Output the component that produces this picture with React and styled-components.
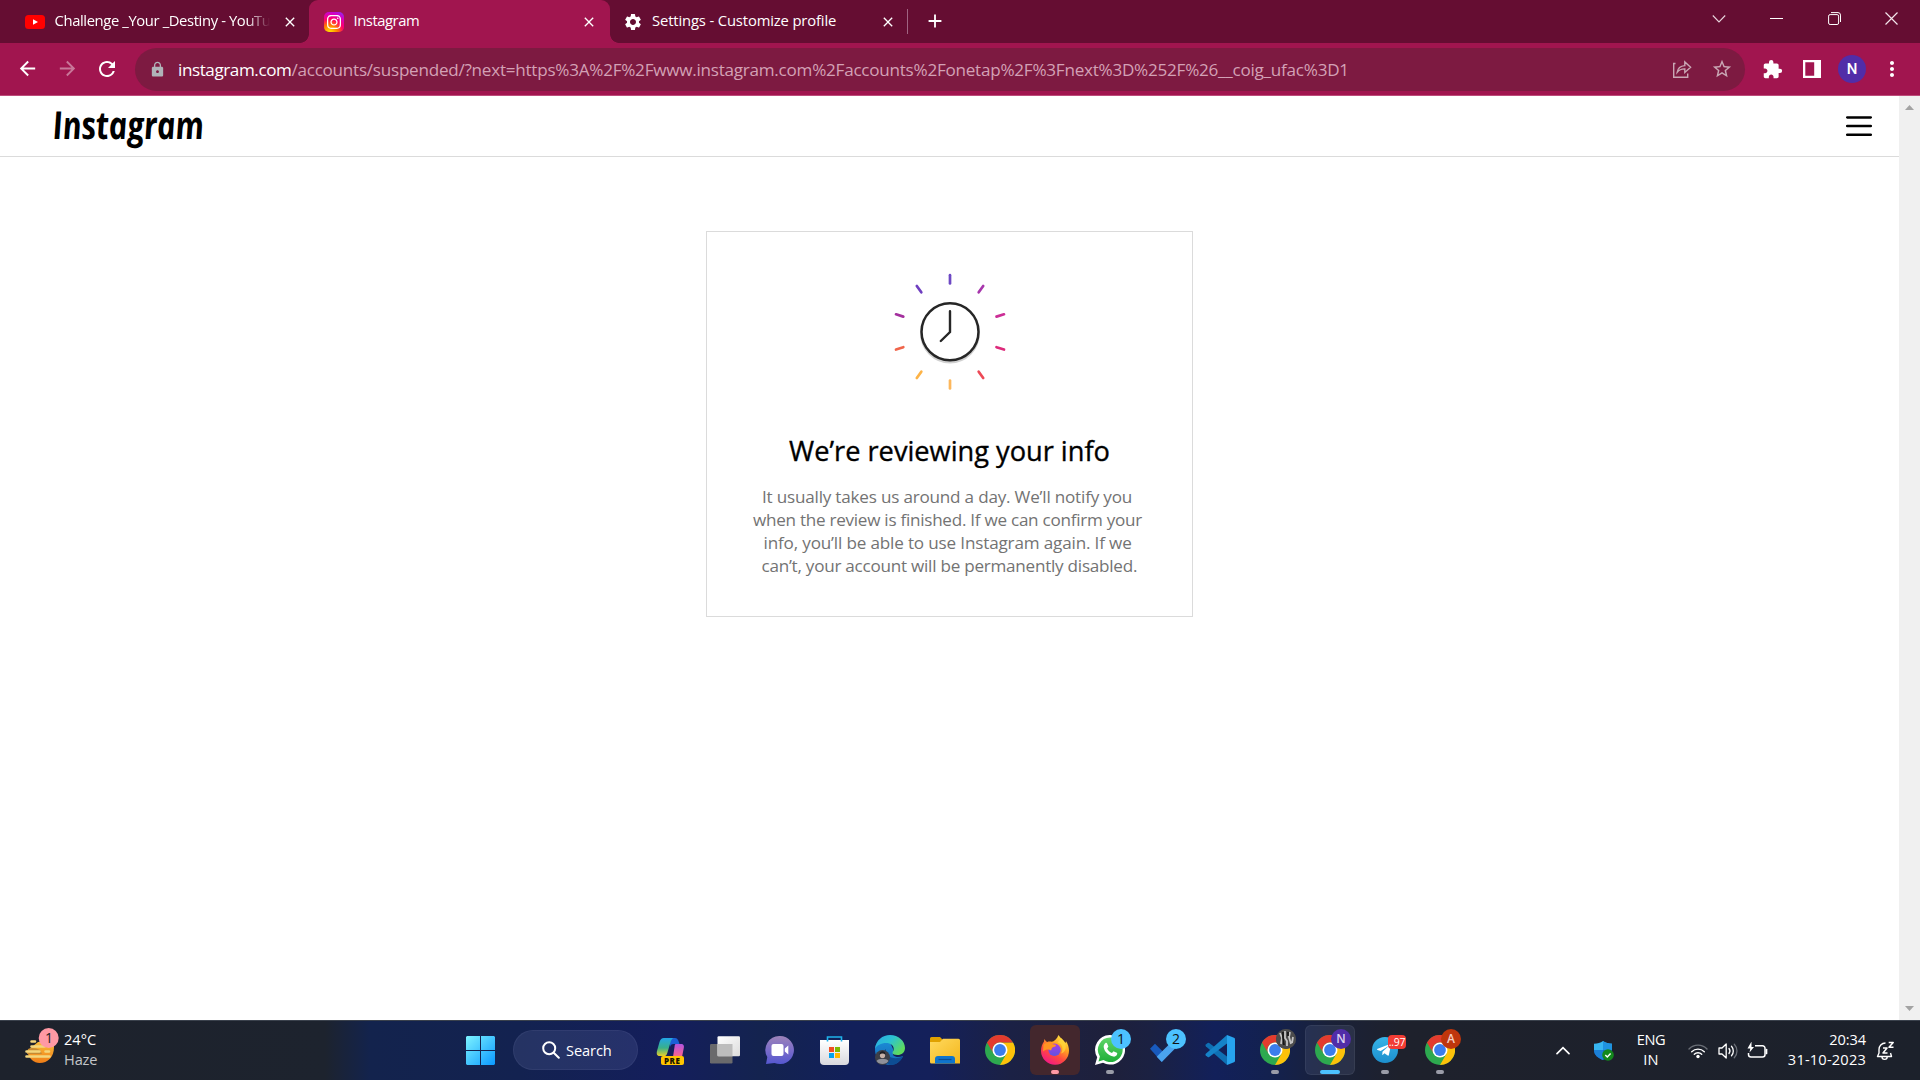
import React, { useLayoutEffect, useRef } from "react";
import styled, { createGlobalStyle } from "styled-components";
import {
  MdArrowBack,
  MdArrowForward,
  MdRefresh,
  MdLock,
  MdSettings,
  MdStarBorder,
  MdExtension,
  MdMoreVert,
  MdClose,
  MdAdd,
} from "react-icons/md";
import { FaTelegramPlane, FaInstagram } from "react-icons/fa";

const Global = createGlobalStyle`
  * { box-sizing: border-box; }
  body {
    margin: 0;
    overflow: hidden;
    background: #fff;
    font-family: "Open Sans", "Noto Sans", sans-serif;
    font-variant-ligatures: none;
  }
  svg { display: block; flex: none; }
`;

/* ---------- text set to an exact measure ---------- */

const Line = styled.span`
  display: inline-block;
  white-space: pre;
  flex: none;
`;

function Fit({ width, children, ...rest }) {
  const ref = useRef(null);
  useLayoutEffect(() => {
    const el = ref.current;
    el.style.letterSpacing = "0px";
    const natural = el.offsetWidth;
    el.style.letterSpacing = `${(width - natural) / el.textContent.length}px`;
  }, [width]);
  return (
    <Line ref={ref} {...rest}>
      {children}
    </Line>
  );
}

/* ---------- browser chrome ---------- */

const Screen = styled.div`
  width: 1920px;
  height: 1080px;
  display: flex;
  flex-direction: column;
  overflow: hidden;
`;

const TabStrip = styled.div`
  height: 43px;
  background: #650d32;
  display: flex;
  align-items: stretch;
  color: #fff;
`;

const Tab = styled.div`
  width: ${(p) => p.$width}px;
  padding: 0 ${(p) => p.$padRight}px 0 ${(p) => p.$padLeft}px;
  display: flex;
  align-items: center;
  background: ${(p) => (p.$active ? "#a1154f" : "transparent")};
  border-radius: 9px 9px 0 0;
  font-size: 14.8px;
  line-height: 39px;
`;

const Flare = styled.div`
  width: 9px;
  margin-${(p) => p.$side}: -9px;
  align-self: flex-end;
  height: 9px;
  background: radial-gradient(
    circle at ${(p) => (p.$side === "left" ? "0" : "100%")} 0,
    transparent 8.5px,
    #a1154f 9.2px
  );
`;

const TabTitle = styled.div`
  flex: 1;
  height: 41px;
  margin-left: ${(p) => p.$gap}px;
  overflow: hidden;
  white-space: nowrap;
  -webkit-mask-image: ${(p) =>
    p.$fade ? "linear-gradient(90deg, #000 192px, transparent 215px)" : "none"};
`;

const TabDivider = styled.div`
  width: 1px;
  height: 25px;
  margin-top: 9px;
  background: #a06482;
`;

const NewTab = styled.div`
  width: 54px;
  height: 42px;
  display: flex;
  align-items: center;
  justify-content: center;
`;

const WindowButtons = styled.div`
  margin-left: auto;
  height: 37px;
  display: flex;
`;

const WindowButton = styled.div`
  width: 57.3px;
  display: flex;
  align-items: center;
  justify-content: center;
`;

const Toolbar = styled.div`
  height: 53px;
  background: #a1154f;
  border-bottom: 1px solid #bd4b7a;
  display: flex;
  align-items: center;
  color: #fff;
`;

const NavButton = styled.div`
  width: 40px;
  display: flex;
  justify-content: center;
  opacity: ${(p) => (p.$dim ? 0.42 : 1)};
`;

const NavGroup = styled.div`
  display: flex;
  width: 135px;
  padding-left: 7px;
`;

const Omnibox = styled.div`
  width: 1610px;
  height: 43px;
  border-radius: 22px;
  background: #7d1a41;
  display: flex;
  align-items: center;
  padding-left: 14px;
  padding-right: 3px;
`;

const Url = styled.div`
  margin-left: 12px;
  flex: 1;
  display: flex;
  font-size: 17.1px;
  line-height: 41px;
  color: #d3a1b5;
  white-space: nowrap;
`;

const Host = styled.div`
  color: #fff;
`;

const OmniAction = styled.div`
  width: 40px;
  display: flex;
  justify-content: center;
`;

const Actions = styled.div`
  display: flex;
  align-items: center;
  margin-left: 7px;
`;

const Action = styled.div`
  width: 40px;
  display: flex;
  justify-content: center;
`;

const Avatar = styled.div`
  width: 28px;
  height: 28px;
  border-radius: 50%;
  background: #512da8;
  font: 500 15px/28px Roboto, sans-serif;
  text-align: center;
`;

/* ---------- page ---------- */

const Viewport = styled.div`
  height: 924px;
  display: flex;
`;

const Page = styled.main`
  width: 1899px;
`;

const PageHeader = styled.header`
  height: 61px;
  border-bottom: 1px solid #dbdbdb;
  display: flex;
  align-items: center;
  justify-content: space-between;
  padding: 0 27px 0 53px;
`;

const Wordmark = styled.div`
  font: italic 700 38.5px/46px "Open Sans", sans-serif;
  color: #000;
  transform: skewX(6deg) scaleX(0.82);
  transform-origin: 0 60%;
  height: 50px;
`;

const Card = styled.section`
  width: 487px;
  height: 386px;
  margin: 74px auto 0 706px;
  border: 1px solid #dbdbdb;
  display: flex;
  flex-direction: column;
  align-items: center;
`;

const ClockWrap = styled.div`
  padding-top: 40px;
`;

const CardTitle = styled.h1`
  margin: 41px 0 0;
  font-size: 27.2px;
  font-weight: 500;
  line-height: 36px;
  color: #000;
  -webkit-text-stroke: 0.35px #000;
`;

const CardText = styled.p`
  margin: 16px 0 0;
  width: 398px;
  font-size: 17.1px;
  line-height: 23.1px;
  color: #737373;
`;

const TextRow = styled.span`
  display: block;
  height: 23.1px;
  padding-left: ${(p) => p.$indent}px;
`;

const Scrollbar = styled.div`
  width: 21px;
  background: #f0f0f0;
  display: flex;
  flex-direction: column;
  justify-content: space-between;
  align-items: center;
  padding: 9px 0;
`;

/* ---------- taskbar ---------- */

const Taskbar = styled.footer`
  height: 60px;
  border-top: 1px solid #3a414c;
  display: flex;
  color: #fff;
  font-size: 14.6px;
  background: linear-gradient(
    90deg,
    #1d222c 0,
    #1d232e 325px,
    #13234d 370px,
    #132250 520px,
    #141e5c 670px,
    #14234f 760px,
    #12205a 850px,
    #14205a 930px,
    #1b2145 1010px,
    #1e203b 1110px,
    #1b2142 1150px,
    #12205a 1215px,
    #13214f 1270px,
    #1a2139 1330px,
    #1e212c 1400px,
    #1c212b 1920px
  );
`;

const Weather = styled.div`
  width: 453px;
  padding-left: 24px;
  display: flex;
`;

const WeatherText = styled.div`
  padding: 8px 0 0 9px;
  line-height: 20px;
  display: flex;
  flex-direction: column;
  align-items: flex-start;
`;

const Muted = styled.div`
  color: #c3c5c9;
`;

const WeatherIcon = styled.div`
  width: 31px;
  padding-top: 6px;
`;

const StartButton = styled.div`
  width: 60px;
  padding: 15px 0 0 13px;
`;

const SearchPill = styled.div`
  width: 125px;
  height: 40px;
  margin: 9px 4.5px 0 0;
  border-radius: 20px;
  background: rgba(120, 135, 190, 0.18);
  border: 1px solid rgba(150, 165, 215, 0.09);
  display: flex;
  align-items: center;
  padding-left: 28px;
  gap: 6px;
`;

const AppSlot = styled.div`
  width: 55px;
  padding: 4px 2.5px 0;
`;

const AppTile = styled.div`
  position: relative;
  width: 50px;
  height: 50px;
  border-radius: 6px;
  padding: 10px 10px 0;
  background: ${(p) => p.$fill || "transparent"};
  box-shadow: ${(p) =>
    p.$outlined ? "inset 0 0 0 1px rgba(255,255,255,0.06)" : "none"};
`;

const Running = styled.div`
  position: absolute;
  bottom: 1px;
  left: ${(p) => (50 - p.$width) / 2}px;
  width: ${(p) => p.$width}px;
  height: 4px;
  border-radius: 2px;
  background: ${(p) => p.$color};
`;

const Badge = styled.div`
  position: absolute;
  top: 4px;
  right: 4px;
  width: 20px;
  height: 20px;
  border-radius: 50%;
  background: ${(p) => p.$fill};
  color: ${(p) => p.$color || "#111"};
  font-size: ${(p) => p.$size || 14}px;
  font-weight: ${(p) => (p.$size ? 600 : 400)};
  line-height: 20px;
  text-align: center;
`;

const CountTag = styled.div`
  position: absolute;
  top: 10px;
  right: 4px;
  width: 18px;
  height: 14px;
  border-radius: 4px;
  background: #f23c34;
  font-size: 10.5px;
  line-height: 14px;
  letter-spacing: -0.3px;
  text-align: center;
`;

const PreTag = styled.div`
  position: absolute;
  left: 16px;
  top: 30.5px;
  width: 22.5px;
  height: 9px;
  border-radius: 2px;
  background: #ffc400;
  color: #1a1400;
  font: 800 8px/9px "Open Sans", sans-serif;
  letter-spacing: 0.5px;
  text-align: center;
`;

const Tray = styled.div`
  margin-left: auto;
  width: 377px;
  display: flex;
  align-items: center;
`;

const TrayItem = styled.div`
  width: ${(p) => p.$width}px;
  display: flex;
  justify-content: center;
`;

const TrayText = styled.div`
  width: ${(p) => p.$width}px;
  height: 60px;
  padding-top: 8.5px;
  line-height: 20px;
  display: flex;
  flex-direction: column;
  align-items: ${(p) => p.$align};
`;

/* ---------- drawings ---------- */

const YouTube = () => (
  <svg width="20" height="14" viewBox="0 0 20 14">
    <rect width="20" height="14" rx="3.5" fill="#f00" />
    <path d="M8 4.2 13 7 8 9.8z" fill="#fff" />
  </svg>
);

const Insta = styled.div`
  width: 20px;
  height: 20px;
  border-radius: 5px;
  color: #fff;
  display: flex;
  align-items: center;
  justify-content: center;
  background: radial-gradient(
    circle at 28% 105%,
    #ffd600 8%,
    #ff7a00 32%,
    #ff0069 55%,
    #d300c5 78%,
    #7638fa 100%
  );
`;

const Caret = () => (
  <svg width="14" height="10" viewBox="0 0 14 10" fill="none" stroke="#e8d5dd" strokeWidth="1.1">
    <path d="M.8 1.5 7 8l6.200-6.500" />
  </svg>
);
const Minimize = () => (
  <svg width="13" height="13" viewBox="0 0 13 13">
    <path d="M0 6.500h13" stroke="#fff" strokeWidth="1" />
  </svg>
);
const Restore = () => (
  <svg width="13" height="13" viewBox="0 0 13 13" fill="none" stroke="#fff">
    <rect x=".6" y="2.600" width="10" height="9.900" rx="1.500" />
    <path d="M3 .6h7a2.500 2.500 0 0 1 2.500 2.500V10" />
  </svg>
);
const CloseWindow = () => (
  <svg width="13" height="13" viewBox="0 0 13 13" stroke="#f3e6eb" strokeWidth="1.2">
    <path d="M.5.5l12 12M12.500.5l-12 12" />
  </svg>
);

const Share = () => (
  <svg width="20" height="20" viewBox="0 0 20 20" fill="none" stroke="#c9a7b4" strokeWidth="1.400">
    <path d="M3.500 4.500H1.700v13.800h14v-3.800" />
    <path d="M5.200 13.300c.6-4.200 3.300-6.400 7.600-6.700V2.900l5.800 5.300-5.800 5.200V9.900c-3.300-.1-5.700.9-7.600 3.400z" />
  </svg>
);

const SidePanel = () => (
  <svg width="18" height="18" viewBox="0 0 18 18">
    <path fillRule="evenodd" fill="#fff" d="M0 0h18v18H0zM2.300 2.300v13.400h8.900V2.300z" />
  </svg>
);

const Menu = () => (
  <svg width="26" height="22" viewBox="0 0 26 22" stroke="#000" strokeWidth="2.500" strokeLinecap="round">
    <path d="M1.200 2.400h23.600M1.200 11h23.600M1.200 19.800h23.600" />
  </svg>
);

const rays = [
  ["#6d48c4", 950, 275.200, 950, 283.500],
  ["#a736ac", 983.200, 286, 978.700, 292.300],
  ["#cc2f96", 1004, 314.300, 996.500, 316.600],
  ["#dd2a7b", 1004, 349.500, 996.500, 347.200],
  ["#ed4956", 983.200, 378, 978.700, 371.700],
  ["#fdb75c", 950, 380.500, 950, 388.500],
  ["#fdb347", 916.800, 378, 921.300, 371.700],
  ["#f0654b", 896, 349.500, 903.300, 347.200],
  ["#a4309e", 896, 314.300, 903.300, 316.600],
  ["#6f3fc0", 916.800, 286, 921.300, 292.300],
];

const Clock = () => (
  <svg width="120" height="120" viewBox="890 272 120 120" fill="none" strokeLinecap="round">
    <circle cx="950" cy="333.800" r="28.500" stroke="#000" strokeOpacity=".18" strokeWidth="2.600" />
    <circle cx="950" cy="331.800" r="28.500" stroke="#262626" strokeWidth="2.500" fill="#fff" />
    <path d="M950 311.300v20.700l-9.200 9" stroke="#262626" strokeWidth="2.400" />
    {rays.map(([c, x1, y1, x2, y2]) => (
      <path key={c} d={`M${x1} ${y1}L${x2} ${y2}`} stroke={c} strokeWidth="2.700" />
    ))}
  </svg>
);

const ScrollArrow = ({ down }) => (
  <svg width="9" height="5" viewBox="0 0 9 5">
    <path d={down ? "M0 0h9L4.500 5z" : "M0 5h9L4.500 0z"} fill="#a3a3a3" />
  </svg>
);

const Haze = () => (
  <svg width="35" height="38" viewBox="0 0 35 38">
    <defs>
      <linearGradient id="sun" x1="0" y1="0" x2="0" y2="1">
        <stop offset="0" stopColor="#f9bd3a" />
        <stop offset="1" stopColor="#ef7d17" />
      </linearGradient>
    </defs>
    <path d="M3 24c2 8 7 12 12.500 12C24 36 30 30 30 20v-5H14z" fill="url(#sun)" />
    <path d="M4 22c4-2 8-1 12 1l2 4H3z" fill="#c58a33" />
    <path d="M7.500 14.500h3.500M7.500 19.500h13M2.500 24.500h13M21.500 24.500h3.500M2.500 29.500h23" stroke="#f3d67c" strokeWidth="2.600" strokeLinecap="round" />
    <circle cx="24.700" cy="11" r="10" fill="#ff99a4" />
    <text x="24.900" y="16" textAnchor="middle" fontFamily="Open Sans" fontSize="14" fill="#222">1</text>
  </svg>
);

const Windows = () => (
  <svg width="29" height="29" viewBox="0 0 29 29">
    <defs>
      <linearGradient id="win" x1="0" y1="0" x2="1" y2="1">
        <stop offset="0" stopColor="#7df3ff" />
        <stop offset="1" stopColor="#0a98ff" />
      </linearGradient>
    </defs>
    <path fill="url(#win)" d="M1 0h13v14H0V1zM15 0h13l1 1v13H15zM0 15h14v14H1l-1-1zM15 15h14v13l-1 1H15z" />
  </svg>
);

const SearchIcon = () => (
  <svg width="18" height="18" viewBox="0 0 18 18" fill="none" stroke="#fff" strokeWidth="2" strokeLinecap="round">
    <circle cx="7.200" cy="7.200" r="6" />
    <path d="M11.700 11.700 16.800 16.800" />
  </svg>
);

const Copilot = () => (
  <svg width="30" height="30" viewBox="-1 0 30 30">
    <defs>
      <linearGradient id="cpa" x1="0" y1="0" x2="0" y2="1">
        <stop offset="0" stopColor="#22a6e8" />
        <stop offset=".55" stopColor="#39b08a" />
        <stop offset="1" stopColor="#e8cf29" />
      </linearGradient>
      <linearGradient id="cpb" x1="0" y1="0" x2="0" y2="1">
        <stop offset="0" stopColor="#b154e0" />
        <stop offset=".6" stopColor="#f2609a" />
        <stop offset="1" stopColor="#ff8a55" />
      </linearGradient>
    </defs>
    <path d="M14 3h5c2 0 3 1.500 3.500 3l1 3h-6c-2 0-3 1-3.500 3z" fill="#1a5fd6" />
    <path d="M8 3h9.500c-2 1-2.500 2.500-3.200 5l-3 10c-.8 2.500-1.500 3-3.500 3H4c-3 0-3.700-2-3-5l2.500-9C4.500 4.500 5.500 3 8 3z" fill="url(#cpa)" />
    <path d="M19.500 9H25c2.700 0 3.400 2 2.700 4.500L26 22c-.5 2-2 4-4 4h-8c2 0 2.500-2 3-4l1.500-10c.3-1.700 0-2 1-3z" fill="url(#cpb)" />
  </svg>
);

const TaskView = () => (
  <svg width="30" height="30" viewBox="0 0 30 30">
    <defs>
      <linearGradient id="tva" x1="0" y1="0" x2="1" y2="1">
        <stop offset="0" stopColor="#fff" />
        <stop offset="1" stopColor="#dcdcdc" />
      </linearGradient>
    </defs>
    <rect x="0" y="9" width="22.500" height="19.500" rx="1.200" fill="#6a6a6c" />
    <rect x="7.500" y="1.200" width="22.500" height="20" rx="1.200" fill="url(#tva)" />
    <path d="M7.500 9h15v12.200h-15z" fill="#bdbdbd" />
  </svg>
);

const Chat = () => (
  <svg width="30" height="30" viewBox="0 0 30 30">
    <defs>
      <linearGradient id="ch" x1="0" y1="0" x2="0" y2="1">
        <stop offset="0" stopColor="#9d83b8" />
        <stop offset=".5" stopColor="#7a6cc9" />
        <stop offset="1" stopColor="#5557cf" />
      </linearGradient>
    </defs>
    <path d="M15 1a14 14 0 1 1-5.500 26.900L1 29l1.300-7A14 14 0 0 1 15 1z" fill="url(#ch)" />
    <rect x="6.500" y="9" width="12" height="12" rx="2" fill="#fff" />
    <path d="M19.800 13.500 23.300 10.500v9l-3.500-3z" fill="#fff" />
  </svg>
);

const Store = () => (
  <svg width="30" height="30" viewBox="1 0 30 30">
    <defs>
      <linearGradient id="st" x1="0" y1="0" x2="0" y2="1">
        <stop offset="0" stopColor="#fff" />
        <stop offset="1" stopColor="#d9d9de" />
      </linearGradient>
    </defs>
    <path d="M1 5h29v21a4 4 0 0 1-4 4H5a4 4 0 0 1-4-4z" fill="url(#st)" />
    <path d="M8.500 6.500V2h14v4.500" fill="none" stroke="#1fb2ea" strokeWidth="1.600" />
    <path d="M10 12h5v5h-5z" fill="#f04e23" />
    <path d="M16 12h5v5h-5z" fill="#7fb900" />
    <path d="M10 18h5v5h-5z" fill="#03a2ee" />
    <path d="M16 18h5v5h-5z" fill="#ffb800" />
  </svg>
);

const Edge = () => (
  <svg width="30" height="30" viewBox="0 0 30 30">
    <defs>
      <linearGradient id="eda" x1="0" y1="0" x2="1" y2=".6">
        <stop offset="0" stopColor="#2aa8e6" />
        <stop offset=".5" stopColor="#2cc3d2" />
        <stop offset="1" stopColor="#5fdc5c" />
      </linearGradient>
      <linearGradient id="edb" x1="0" y1="0" x2="0" y2="1">
        <stop offset="0" stopColor="#1b8fd9" />
        <stop offset="1" stopColor="#1668b5" />
      </linearGradient>
    </defs>
    <path d="M0 15C0 7 7 2 14 5l4 9 0 6c3 3 7 2 10 1-2 5-7 9-13 9C7 30 0 23 0 15z" fill="url(#edb)" />
    <path d="M11 14c-1 7 7 12 17 7.500C25 27 21 30 16 30 9 29 6 18 11 14z" fill="#0d4d94" />
    <path d="M0 14C1 5 7.500 0 15 0c8.500 0 15 6 15 13 0 4.500-3.500 7-7.500 7-3 0-5-1-5-2.300s1.200-1.700 1.200-4c0-3-3-5.700-7.500-5.700C6 8 1.500 10.500 0 14z" fill="url(#eda)" />
    <circle cx="7.500" cy="22.500" r="7.500" fill="#3d3f47" />
    <circle cx="7.500" cy="20.500" r="2.600" fill="#c7b2a8" />
    <path d="M1.500 26c2-3 10-3 12 0a7.500 7.500 0 0 1-12 0z" fill="#8f919b" />
    <path d="M4.500 19.500c0-4.500 6-4.500 6 0-1-1.500-5-1.500-6 0z" fill="#1c1d22" />
  </svg>
);

const Explorer = () => (
  <svg width="30" height="30" viewBox="0 0 30 30">
    <defs>
      <linearGradient id="fo" x1="0" y1="0" x2="1" y2="1">
        <stop offset="0" stopColor="#ffd95e" />
        <stop offset="1" stopColor="#f4b71c" />
      </linearGradient>
    </defs>
    <path d="M1.500 2H10l3 3v6H0V3.500A1.500 1.500 0 0 1 1.500 2z" fill="#e0a100" />
    <path d="M0 7h10l3-3.200h15.500A1.500 1.500 0 0 1 30 5.300V28.500H1.500A1.500 1.500 0 0 1 0 27z" fill="url(#fo)" />
    <path d="M5 28.500V24a3 3 0 0 1 3-3h14a3 3 0 0 1 3 3v4.500z" fill="#0f74cc" />
    <path d="M8.500 24.500h13" stroke="#0a4e94" strokeWidth="1.200" />
  </svg>
);

const ChromeIcon = () => (
  <svg width="30" height="30" viewBox="0 0 30 30">
    <circle cx="15" cy="15" r="15" fill="#2da94f" />
    <path d="M15 7.500H28A15 15 0 0 1 15 30l6.500-11.250z" fill="#fdc20a" />
    <path d="M2 7.500A15 15 0 0 1 28 7.500H15a7.500 7.500 0 0 0-6.500 11.250z" fill="#e33b2e" />
    <circle cx="15" cy="15" r="7.500" fill="#fff" />
    <circle cx="15" cy="15" r="5.900" fill="#3b7ded" />
  </svg>
);

const Firefox = () => (
  <svg width="30" height="30" viewBox="0 0 30 30">
    <defs>
      <linearGradient id="ffa" x1=".85" y1="0" x2=".25" y2="1">
        <stop offset="0" stopColor="#fff04f" />
        <stop offset=".35" stopColor="#ffa621" />
        <stop offset=".65" stopColor="#ff4a3e" />
        <stop offset="1" stopColor="#f0148c" />
      </linearGradient>
      <linearGradient id="ffb" x1=".5" y1="0" x2=".5" y2="1">
        <stop offset="0" stopColor="#a63ce8" />
        <stop offset="1" stopColor="#6054e0" />
      </linearGradient>
    </defs>
    <path d="M18.500 0c2 3.300 5 4.500 7 8 .4-.6.500-1.300.4-2C28 9 29 12.500 29 15.500A14 14 0 0 1 1 16c0-4 1.200-7 3-9.500C4 5.500 4.200 5 4.600 4c.5 1.300 1.400 2.200 2.600 3 1.400-.5 3-.6 4.500-.2C14 6.500 17 4 18.500 0z" fill="url(#ffa)" />
    <circle cx="14.500" cy="14.800" r="6.200" fill="url(#ffb)" />
    <path d="M3.500 9.500c3-2.500 7-2 9.500-.2 1.500.2 3 .3 3 1.300 0 1.300-2.500 1.200-3.500 2-1 .7-1 2-1.500 3-2-1.500-5-1.500-8 1z" fill="#ff9422" />
    <path d="M17.500 7.500c4.500 1.200 6.500 6.500 3.500 11 4-1 5.500-5 4.500-9.500l-4-6z" fill="#ffdb3c" opacity=".65" />
  </svg>
);

const WhatsAppBubble = () => (
  <svg width="30" height="30" viewBox="0 0 30 30">
    <defs>
      <linearGradient id="wa" x1="0" y1="0" x2="0" y2="1">
        <stop offset="0" stopColor="#5fd669" />
        <stop offset="1" stopColor="#1fae38" />
      </linearGradient>
    </defs>
    <path d="M15.200 0A14.800 14.800 0 1 1 8 27.700L0 30l2.200-7.700A14.800 14.800 0 0 1 15.200 0z" fill="#fff" />
    <path d="M15.200 2.500A12.300 12.300 0 1 1 8.500 25l-5 1.500 1.400-5A12.300 12.300 0 0 1 15.200 2.500z" fill="url(#wa)" />
    <path d="M10.500 8c.6-.3 1.300-.2 1.600.4l1.200 2.800c.2.600-.2 1-1.200 2.200 1 2.200 2.600 3.700 4.900 4.700 1-1 1.300-1.900 1.900-1.700l2.900 1.400c.6.300.5 1 .2 1.800-.6 1.500-2.200 2.200-3.600 2-5-.8-9.300-5.200-9.700-9.500-.1-1.700.7-3.400 1.800-4.100z" fill="#fff" />
  </svg>
);

const Todo = () => (
  <svg width="30" height="30" viewBox="0 0 30 30">
    <path d="M0 13.800 5 8.800l11.800 11.600-5 6.500z" fill="#185abd" />
    <path d="M11.800 26.900 6.700 21.700 24.500 4l5 5z" fill="#4aa3ee" />
  </svg>
);

const VsCode = () => (
  <svg width="30" height="30" viewBox="0 0 30 30">
    <path d="M.8 9.500 2.700 7.900q.8-.5 1.500 0L22 21.500V30L.8 11.300q-.8-.9 0-1.800z" fill="#0f70b4" />
    <path d="M.8 20.500 2.700 22.100q.8.500 1.500 0L22 8.500V0L.8 18.700q-.8.900 0 1.800z" fill="#1583c9" />
    <path d="M22 0l7 2.700q1 .4 1 1.500v21.600q0 1.100-1 1.500L22 30z" fill="#27a3ee" />
  </svg>
);

const Telegram = styled.div`
  width: 26px;
  height: 26px;
  margin: 2px;
  border-radius: 50%;
  background: linear-gradient(#37b4e8, #1c8fcd);
  display: flex;
  align-items: center;
  justify-content: center;
  padding-right: 2px;
`;

const Portrait = () => (
  <svg width="20" height="20" viewBox="0 0 20 20">
    <circle cx="10" cy="10" r="10" fill="#4c4c4c" />
    <path d="M4 4l2 5-1 6M9 2v7l2 3v5M14 3l-1 5 2 7M17 8l-1 6" stroke="#c4c4c4" strokeWidth="1.800" fill="none" />
    <path d="M7 3v6l1 7M12 3v4" stroke="#151515" strokeWidth="1.700" fill="none" />
  </svg>
);

const Shield = () => (
  <svg width="20" height="20" viewBox="0 0 20 20">
    <path d="M9 0c2.500 2 5.500 2.500 9 2.700V9H0V2.700C3.500 2.500 6.500 2 9 0z" fill="#37b6f1" />
    <path d="M9 0c2.500 2 5.500 2.500 9 2.700V9H9z" fill="#1f93e0" />
    <path d="M0 9h18c0 5-4 8-9 10C4 17 0 14 0 9z" fill="#1769c4" />
    <path d="M0 9h9v10C4 17 0 14 0 9z" fill="#1b7fd6" />
    <circle cx="14" cy="14" r="5.800" fill="#13881c" />
    <path d="M11.300 14l2 2 3.300-3.500" fill="none" stroke="#fff" strokeWidth="1.400" />
  </svg>
);

const ChevronUp = () => (
  <svg width="14" height="9" viewBox="0 0 14 9">
    <path d="M1 7.600 7 1.600l6 6" fill="none" stroke="#fff" strokeWidth="1.700" strokeLinecap="round" />
  </svg>
);

const Wifi = () => (
  <svg width="20" height="16" viewBox="0 0 20 16" fill="none" strokeWidth="1.400" strokeLinecap="round">
    <path d="M1 6a12.500 12.500 0 0 1 18 0" stroke="#6a6e76" />
    <path d="M3.700 8.700a9 9 0 0 1 12.600 0" stroke="#fff" />
    <path d="M6.300 11.200a5.300 5.300 0 0 1 7.400 0" stroke="#fff" />
    <circle cx="10" cy="13.500" r="1.700" fill="#fff" />
  </svg>
);

const Speaker = () => (
  <svg width="21" height="18" viewBox="0 0 21 18" fill="none" strokeWidth="1.300" strokeLinecap="round" strokeLinejoin="round">
    <path d="M1 6h3l4.200-4v14L4 12H1z" stroke="#fff" />
    <path d="M11 6.500a4 4 0 0 1 0 5M13.500 4.300a7 7 0 0 1 0 9.400" stroke="#fff" />
    <path d="M16.300 2.200a10 10 0 0 1 0 13.600" stroke="#6a6e76" />
  </svg>
);

const Battery = () => (
  <svg width="21" height="18" viewBox="0 0 21 18" fill="none">
    <path d="M8 3.800h7.500a2.500 2.500 0 0 1 2.500 2.500v6.200a2.500 2.500 0 0 1-2.500 2.500H4A2.500 2.500 0 0 1 1.500 12.500V11" stroke="#fff" strokeWidth="1.500" />
    <path d="M19.500 7.500v4" stroke="#fff" strokeWidth="1.700" strokeLinecap="round" />
    <path d="M4.500-.5.500 6.500h2.800L2.500 10.500 7 5H4.500z" fill="#fff" />
  </svg>
);

const Bell = () => (
  <svg width="19" height="20" viewBox="0 0 19 20" fill="none" stroke="#fff" strokeWidth="1.400" strokeLinejoin="round">
    <path d="M9.500 2C5.500 2 3 5 3 8.500V12l-1.500 3.500h14L14.500 12" />
    <path d="M6 15.800a2.600 2.600 0 0 0 5.200 0" />
    <path d="M7 7h4l-4 5h4.500M12.700 1.500h4.500L13 6.300h4.500" strokeWidth="1.500" />
  </svg>
);

/* ---------- data ---------- */

const reviewLines = [
  [11.500, 370, "It usually takes us around a day. We’ll notify you"],
  [2.500, 388.500, "when the review is finished. If we can confirm your"],
  [13, 368, "info, you’ll be able to use Instagram again. If we"],
  [11, 376, "can’t, your account will be permanently disabled."],
];

const gray = "#9a9ca8";

const apps = [
  { id: "copilot", icon: <Copilot />, over: <PreTag>PRE</PreTag> },
  { id: "taskview", icon: <TaskView /> },
  { id: "chat", icon: <Chat /> },
  { id: "store", icon: <Store /> },
  { id: "edge", icon: <Edge /> },
  { id: "explorer", icon: <Explorer /> },
  { id: "chrome", icon: <ChromeIcon /> },
  { id: "firefox", icon: <Firefox />, fill: "#43272d", run: [8, "#ff99a4"] },
  {
    id: "whatsapp",
    icon: <WhatsAppBubble />,
    run: [8, gray],
    over: <Badge $fill="#4cc2ff">1</Badge>,
  },
  { id: "todo", icon: <Todo />, over: <Badge $fill="#4cc2ff">2</Badge> },
  { id: "vscode", icon: <VsCode /> },
  {
    id: "chrome-photo",
    icon: <ChromeIcon />,
    run: [8, gray],
    over: <Badge $fill="#444"><Portrait /></Badge>,
  },
  {
    id: "chrome-n",
    icon: <ChromeIcon />,
    fill: "rgba(150,160,200,0.13)",
    outlined: true,
    run: [20, "#4cc2ff"],
    over: <Badge $fill="#512da8" $color="#ddd3f2" $size={12}>N</Badge>,
  },
  {
    id: "telegram",
    icon: <Telegram><FaTelegramPlane size={16} /></Telegram>,
    run: [8, gray],
    over: <CountTag>..97</CountTag>,
  },
  {
    id: "chrome-a",
    icon: <ChromeIcon />,
    run: [8, gray],
    over: <Badge $fill="#bf360c" $color="#f6cfc2" $size={12}>A</Badge>,
  },
];

export default function App() {
  return (
    <Screen>
      <Global />
      <TabStrip>
        <Tab $width={309} $padLeft={25} $padRight={11}>
          <YouTube />
          <TabTitle $gap={9.500} $fade>
            <Fit width={233}>Challenge _Your _Destiny - YouTube</Fit>
          </TabTitle>
          <MdClose size={16} />
        </Tab>
        <Flare $side="left" />
        <Tab $width={301} $padLeft={15} $padRight={13.500} $active>
          <Insta><FaInstagram size={16} /></Insta>
          <TabTitle $gap={9.500}>
            <Fit width={66}>Instagram</Fit>
          </TabTitle>
          <MdClose size={16} />
        </Tab>
        <Flare $side="right" />
        <Tab $width={297} $padLeft={13} $padRight={11.500}>
          <MdSettings size={20} />
          <TabTitle $gap={9}>
            <Fit width={184}>Settings - Customize profile</Fit>
          </TabTitle>
          <MdClose size={16} />
        </Tab>
        <TabDivider />
        <NewTab><MdAdd size={22} /></NewTab>
        <WindowButtons>
          <WindowButton><Caret /></WindowButton>
          <WindowButton><Minimize /></WindowButton>
          <WindowButton><Restore /></WindowButton>
          <WindowButton><CloseWindow /></WindowButton>
        </WindowButtons>
      </TabStrip>

      <Toolbar>
        <NavGroup>
          <NavButton><MdArrowBack size={23} /></NavButton>
          <NavButton $dim><MdArrowForward size={23} /></NavButton>
          <NavButton><MdRefresh size={24} /></NavButton>
        </NavGroup>
        <Omnibox>
          <MdLock size={17} color="#b0b3b8" />
          <Url>
            <Host><Fit width={113.500}>instagram.com</Fit></Host>
            <Fit width={1057}>
              /accounts/suspended/?next=https%3A%2F%2Fwww.instagram.com%2Faccounts%2Fonetap%2F%3Fnext%3D%252F%26__coig_ufac%3D1
            </Fit>
          </Url>
          <OmniAction><Share /></OmniAction>
          <OmniAction><MdStarBorder size={22} color="#c9a7b4" /></OmniAction>
        </Omnibox>
        <Actions>
          <Action><MdExtension size={21} /></Action>
          <Action><SidePanel /></Action>
          <Action><Avatar>N</Avatar></Action>
          <Action><MdMoreVert size={24} /></Action>
        </Actions>
      </Toolbar>

      <Viewport>
        <Page>
          <PageHeader>
            <Wordmark><Fit width={184}>Instagram</Fit></Wordmark>
            <Menu />
          </PageHeader>
          <Card>
            <ClockWrap><Clock /></ClockWrap>
            <CardTitle><Fit width={321}>We’re reviewing your info</Fit></CardTitle>
            <CardText>
              {reviewLines.map(([indent, width, text]) => (
                <TextRow key={text} $indent={indent}>
                  <Fit width={width}>{text}</Fit>
                </TextRow>
              ))}
            </CardText>
          </Card>
        </Page>
        <Scrollbar>
          <ScrollArrow />
          <ScrollArrow down />
        </Scrollbar>
      </Viewport>

      <Taskbar>
        <Weather>
          <WeatherIcon><Haze /></WeatherIcon>
          <WeatherText>
            <Fit width={32}>24°C</Fit>
            <Muted><Fit width={33.500}>Haze</Fit></Muted>
          </WeatherText>
        </Weather>
        <StartButton><Windows /></StartButton>
        <SearchPill>
          <SearchIcon />
          <Fit width={45.500}>Search</Fit>
        </SearchPill>
        {apps.map((app) => (
          <AppSlot key={app.id}>
            <AppTile $fill={app.fill} $outlined={app.outlined}>
              {app.icon}
              {app.over}
              {app.run && <Running $width={app.run[0]} $color={app.run[1]} />}
            </AppTile>
          </AppSlot>
        ))}
        <Tray>
          <TrayItem $width={40}><ChevronUp /></TrayItem>
          <TrayItem $width={42}><Shield /></TrayItem>
          <TrayText $width={52} $align="center">
            <Fit width={29}>ENG</Fit>
            <Fit width={15.500}>IN</Fit>
          </TrayText>
          <TrayItem $width={42}><Wifi /></TrayItem>
          <TrayItem $width={19}><Speaker /></TrayItem>
          <TrayItem $width={39}><Battery /></TrayItem>
          <TrayText $width={89} $align="flex-end">
            <Fit width={36.500}>20:34</Fit>
            <Fit width={78}>31-10-2023</Fit>
          </TrayText>
          <TrayItem $width={39}><Bell /></TrayItem>
        </Tray>
      </Taskbar>
    </Screen>
  );
}
